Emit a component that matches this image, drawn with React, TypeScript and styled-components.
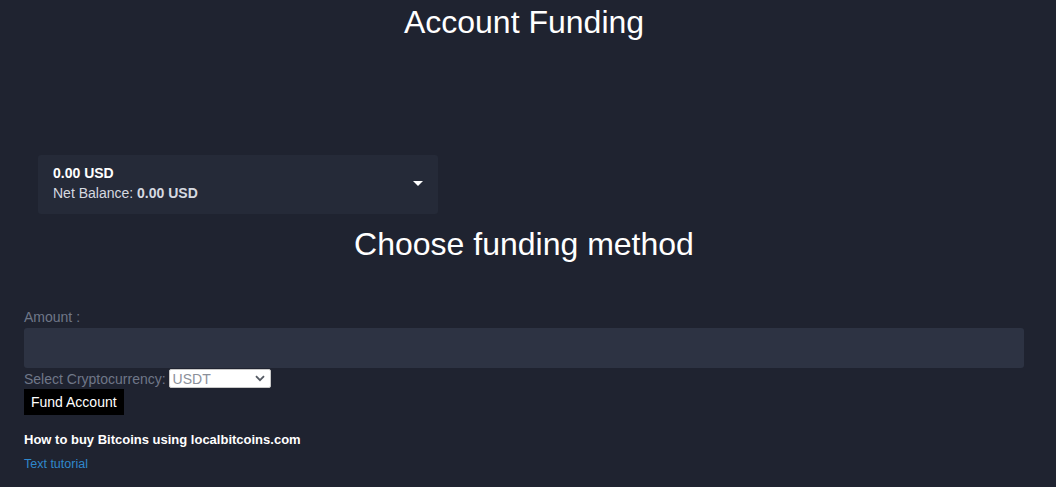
import React from 'react';
import styled, { createGlobalStyle } from 'styled-components';

const GlobalStyle = createGlobalStyle`
  html, body {
    margin: 0;
    padding: 0;
    background: #1f2330;
  }

  body {
    font-family: "Liberation Sans", Arial, sans-serif;
    color: #ffffff;
  }
`;

const Page = styled.div`
  min-height: 487px;
  padding: 4px 16px 0 8px;
  box-sizing: border-box;
`;

const Title = styled.h1`
  margin: 0;
  font-size: 32px;
  font-weight: 400;
  line-height: 37px;
  text-align: center;
  color: #ffffff;
`;

const BalanceCard = styled.div`
  margin: 114px 0 0 30px;
  width: 400px;
  height: 59px;
  box-sizing: border-box;
  padding: 8px 15px 0 15px;
  background: #252a38;
  border-radius: 3px;
  display: flex;
  align-items: flex-start;
  justify-content: space-between;
`;

const BalanceText = styled.div`
  display: flex;
  flex-direction: column;
  font-size: 14px;
  line-height: 20px;
`;

const Amount = styled.span`
  font-weight: 700;
  color: #ffffff;
`;

const NetBalance = styled.span`
  color: #d6d9e0;

  b {
    font-weight: 700;
  }
`;

const Caret = styled.span`
  width: 0;
  height: 0;
  margin-top: 18px;
  border-left: 5px solid transparent;
  border-right: 5px solid transparent;
  border-top: 5px solid #ffffff;
`;

const SubTitle = styled.h2`
  margin: 12px 0 0;
  font-size: 32px;
  font-weight: 400;
  line-height: 37px;
  text-align: center;
  color: #ffffff;
`;

const Form = styled.form`
  margin-top: 46px;
  padding: 0 16px;
  display: flex;
  flex-direction: column;
  align-items: flex-start;
`;

const Label = styled.label`
  font-size: 14px;
  line-height: 16px;
  color: #6f7788;
`;

const AmountInput = styled.input`
  margin-top: 3px;
  width: 100%;
  height: 40px;
  box-sizing: border-box;
  border: none;
  border-radius: 3px;
  background: #2d3343;
  color: #ffffff;
  padding: 0 10px;
  font-size: 14px;
  outline: none;
`;

const SelectRow = styled.div`
  margin-top: 1px;
  display: flex;
  align-items: center;
  gap: 3px;
`;

const SelectBox = styled.div`
  position: relative;
  width: 102px;
  height: 19px;
`;

const Select = styled.select`
  appearance: none;
  width: 100%;
  height: 100%;
  box-sizing: border-box;
  border: 1px solid #c8c8c8;
  border-radius: 2px;
  background: #ffffff;
  color: #8b909a;
  font-family: "Liberation Sans", Arial, sans-serif;
  font-size: 14px;
  padding: 0 0 0 3px;
  outline: none;
`;

const Chevron = styled.svg`
  position: absolute;
  right: 6px;
  top: 6px;
  pointer-events: none;
`;

const FundButton = styled.button`
  margin-top: 1px;
  height: 26px;
  padding: 0 7px;
  border: none;
  background: #000000;
  color: #ffffff;
  font-family: "Liberation Sans", Arial, sans-serif;
  font-size: 14px;
  cursor: pointer;
`;

const Guide = styled.div`
  margin-top: 17px;
  padding: 0 16px;
`;

const GuideTitle = styled.h4`
  margin: 0;
  font-size: 13px;
  line-height: 15px;
  font-weight: 700;
  color: #ffffff;
`;

const GuideLink = styled.a`
  display: block;
  margin-top: 10px;
  font-size: 12.5px;
  line-height: 14px;
  color: #2f88cc;
  text-decoration: none;
`;

export default function App() {
  return (
    <>
      <GlobalStyle />
      <Page>
        <Title>Account Funding</Title>

        <BalanceCard>
          <BalanceText>
            <Amount>0.00 USD</Amount>
            <NetBalance>
              Net Balance: <b>0.00 USD</b>
            </NetBalance>
          </BalanceText>
          <Caret />
        </BalanceCard>

        <SubTitle>Choose funding method</SubTitle>

        <Form onSubmit={(e) => e.preventDefault()}>
          <Label htmlFor="amount">Amount :</Label>
          <AmountInput id="amount" type="text" />
          <SelectRow>
            <Label htmlFor="crypto">Select Cryptocurrency:</Label>
            <SelectBox>
              <Select id="crypto" defaultValue="USDT">
                <option value="USDT">USDT</option>
                <option value="BTC">BTC</option>
                <option value="ETH">ETH</option>
              </Select>
              <Chevron width="10" height="7" viewBox="0 0 10 7">
                <path d="M1 1.2 L5 5.2 L9 1.2" fill="none" stroke="#555a63" strokeWidth="1.8" />
              </Chevron>
            </SelectBox>
          </SelectRow>
          <FundButton type="submit">Fund Account</FundButton>
        </Form>

        <Guide>
          <GuideTitle>How to buy Bitcoins using localbitcoins.com</GuideTitle>
          <GuideLink href="#">Text tutorial</GuideLink>
        </Guide>
      </Page>
    </>
  );
}
